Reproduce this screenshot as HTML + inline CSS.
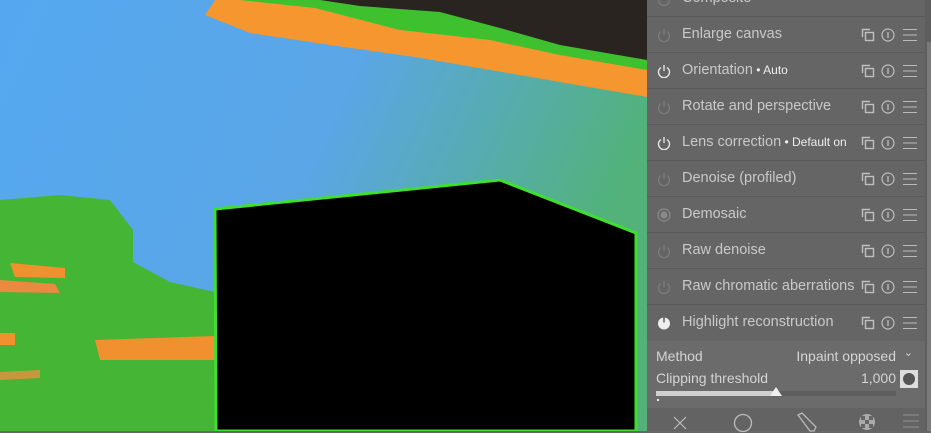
<!DOCTYPE html>
<html><head><meta charset="utf-8"><style>
*{margin:0;padding:0;box-sizing:border-box}
body{width:931px;height:431px;overflow:hidden;background:#666;font-family:"Liberation Sans",sans-serif;position:relative}
#img{position:absolute;left:0;top:0;width:647px;height:431px}
#panel{position:absolute;left:647px;top:0;width:278px;height:431px;background:#656565}
.row{position:absolute;left:0;width:278px;height:36px;border-bottom:1px solid #5a5a5a}
.row .t{position:absolute;left:35px;top:9px;font-size:14.5px;color:#c9c9c9;white-space:nowrap}
.row .t small{font-size:12px;color:#eee}
.pw{position:absolute;left:10px;top:11px}
.ic{position:absolute;top:11px}
#sb{position:absolute;left:925px;top:0;width:6px;height:431px;background:#5e5e5e}
#sb i{position:absolute;left:2px;top:42px;width:4px;height:389px;background:#7a7a7a}
</style></head><body>
<svg id="img" viewBox="0 0 647 431">
<defs>
<linearGradient id="bg" x1="0" y1="0" x2="1" y2="0.3"><stop offset="0" stop-color="#55a8f0"/><stop offset="0.55" stop-color="#5aa6e6"/><stop offset="1" stop-color="#52b27a"/></linearGradient>
</defs>
<rect width="647" height="431" fill="url(#bg)"/>
<polygon points="0,200 60,195 110,200 133,230 133,262 170,282 215,292 215,431 0,431" fill="#45b535"/>
<polygon points="215,300 215,431 200,431 200,300" fill="#45b535"/>
<polygon points="10,263 65,268 65,278 15,277" fill="#f0902e"/>
<polygon points="0,280 55,284 60,293 0,292" fill="#e88a40"/>
<polygon points="0,333 15,333 15,345 0,345" fill="#f0902e"/>
<polygon points="95,340 215,336 215,360 100,360" fill="#f0902e"/>
<polygon points="0,372 40,370 40,378 0,380" fill="#e89040" opacity="0.8"/>
<polygon points="215,0 240,0 315,7 400,30 490,37 560,55 647,63 647,97 560,82 415,57 330,45 250,33 205,15" fill="#f5962f"/>
<polygon points="240,0 647,0 647,70 560,55 490,40 400,30 315,8" fill="#3fc02f"/>
<polygon points="320,0 647,0 647,60 560,45 500,28 440,12 360,6" fill="#2a2420"/>
<polygon points="215,209 500,180 636,233 636,431 216,431" fill="#000" stroke="#3ee030" stroke-width="3"/>
</svg>
<div id="panel">
<div class="row" style="top:-19px"><svg class="pw" width="14" height="14" viewBox="0 0 14 14"><path d="M4 3.5A5.5 5.5 0 1 0 10 3.5M7 1v6" fill="none" stroke="#7c7c7c" stroke-width="1.3"/></svg><span class="t">Composite</span></div>
</div>
<div id="sb"><i></i></div>
<script>
var rows=[["Enlarge canvas",0],["Orientation",1," • Auto"],["Rotate and perspective",0],["Lens correction",1," • Default on"],["Denoise (profiled)",0],["Demosaic",2],["Raw denoise",0],["Raw chromatic aberrations",0],["Highlight reconstruction",3]];
var p=document.getElementById('panel'),h='';
var ic='<svg class="ic" style="left:214px" width="14" height="14" viewBox="0 0 14 14"><path d="M1.5 9V1.5H9" fill="none" stroke="#c0c0c0" stroke-width="1.4"/><rect x="4.5" y="4.5" width="8" height="8" fill="none" stroke="#c0c0c0" stroke-width="1.4"/></svg><svg class="ic" style="left:234px" width="14" height="14" viewBox="0 0 14 14"><circle cx="7" cy="7" r="6" fill="none" stroke="#c0c0c0" stroke-width="1.2"/><path d="M7 4v6" stroke="#c0c0c0" stroke-width="1.3"/></svg><svg class="ic" style="left:256px" width="14" height="14" viewBox="0 0 14 14"><path d="M0 1.5h14M0 7h14M0 12.5h14" stroke="#bbb" stroke-width="1"/></svg>';
rows.forEach(function(r,i){
var y=17+i*36,c=r[1]==0?'#7c7c7c':'#eee';
var pw=r[1]==2?'<svg class="pw" width="14" height="14"><circle cx="7" cy="7" r="6" fill="none" stroke="#8a8a8a" stroke-width="1.2"/><circle cx="7" cy="7" r="3.5" fill="#8a8a8a"/></svg>':r[1]==3?'<svg class="pw" width="14" height="14"><circle cx="7" cy="7.5" r="6" fill="#eee"/><path d="M7 0.5v6" stroke="#666" stroke-width="1.6"/></svg>':'<svg class="pw" width="14" height="14" viewBox="0 0 14 14"><path d="M4 3.5A5.5 5.5 0 1 0 10 3.5M7 1v6" fill="none" stroke="'+c+'" stroke-width="1.3"/></svg>';
h+='<div class="row" style="top:'+y+'px'+(i==8?';border-bottom:none':'')+'">'+pw+'<span class="t">'+r[0]+(r[2]?'<small>'+r[2]+'</small>':'')+'</span>'+ic+'</div>';
});
h+='<div style="position:absolute;top:341px;left:0;width:278px;height:67px;background:#6b6b6b;color:#d4d4d4;font-size:14px">'+
'<span style="position:absolute;left:9px;top:7px">Method</span><span style="position:absolute;right:29px;top:7px">Inpaint opposed</span><span style="position:absolute;right:12px;top:5px;font-size:11px">&#8964;</span>'+
'<span style="position:absolute;left:9px;top:29px">Clipping threshold</span><span style="position:absolute;right:29px;top:29px">1,000</span>'+
'<div style="position:absolute;right:7px;top:29px;width:18px;height:18px;background:#ddd"><div style="margin:3px;width:12px;height:12px;border-radius:50%;background:#555"></div></div>'+
'<div style="position:absolute;left:9px;top:50px;width:240px;height:5px;background:#5e5e5e"></div><div style="position:absolute;left:9px;top:50px;width:120px;height:5px;background:#cfcfcf"></div>'+
'<div style="position:absolute;left:123px;top:46px;width:0;height:0;border-left:6px solid transparent;border-right:6px solid transparent;border-bottom:9px solid #f0f0f0"></div>'+
'<div style="position:absolute;left:10px;top:58px;width:2px;height:2px;background:#eee"></div></div>'+
'<div style="position:absolute;top:408px;left:0;width:278px;height:23px;background:#636363">'+
'<svg style="position:absolute;left:25px;top:7px" width="16" height="16"><path d="M2 2l12 12M14 2L2 14" stroke="#bbb" stroke-width="1.2"/></svg>'+
'<svg style="position:absolute;left:86px;top:5px" width="20" height="20"><circle cx="10" cy="10" r="8.5" fill="none" stroke="#bbb" stroke-width="1.3"/></svg>'+
'<svg style="position:absolute;left:148px;top:4px" width="22" height="20"><path d="M3 3l4-2 14 14-2 4-4 0z" fill="none" stroke="#bbb" stroke-width="1.3"/></svg>'+
'<svg style="position:absolute;left:210px;top:4px" width="20" height="20"><circle cx="10" cy="10" r="8" fill="#aaa"/><path d="M4 4h4v4H4zM12 4h4v4h-4zM8 8h4v4H8zM4 12h4v4H4zM12 12h4v4h-4z" fill="#666"/></svg>'+
'<svg style="position:absolute;left:256px;top:5px" width="16" height="18"><path d="M0 2h16M0 8h16M0 14h16" stroke="#888" stroke-width="1.2"/></svg></div>';
p.insertAdjacentHTML('beforeend',h);
</script>
</body></html>
